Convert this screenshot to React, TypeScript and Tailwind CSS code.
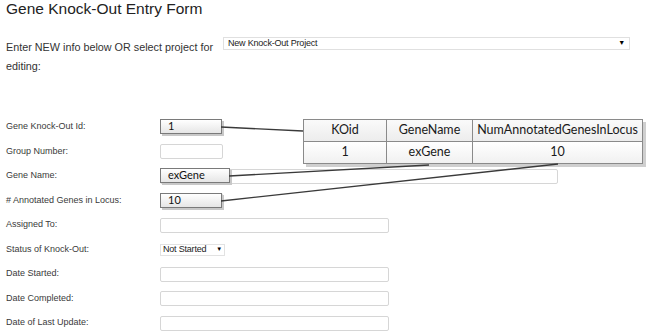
import { ReactNode } from "react";

const labelFont = { fontFamily: '"Liberation Sans", Arial, sans-serif' };
const calloutFont = { fontFamily: 'Lato, "Open Sans", sans-serif' };

function Field({ label, children }: { label: string; children?: ReactNode }) {
  return (
    <div className="flex h-[16px] items-center">
      <div className="w-[154px] shrink-0 text-[9px] text-[#3a3a3a]">{label}</div>
      <div className="relative flex h-full items-center">{children}</div>
    </div>
  );
}

function TextBox({ width }: { width: string }) {
  return <div className={`h-[15px] rounded-[2px] border border-[#d6d6d6] bg-white ${width}`} />;
}

function Callout({ text, width }: { text: string; width: string }) {
  return (
    <div
      className={`absolute left-0 top-0 flex h-[15px] items-center border border-[#7a7a7a] bg-gradient-to-b from-white to-[#e6e6e6] pl-[7px] text-[11px] text-[#111] shadow-[2px_2px_0_#c8c8c8] ${width}`}
      style={calloutFont}
    >
      {text}
    </div>
  );
}

export default function App() {
  return (
    <div className="relative h-[336px] w-[650px] overflow-hidden bg-white" style={labelFont}>
      <h1 className="pl-[6px] text-[15.5px] leading-[17px] text-[#222]">
        Gene Knock-Out Entry Form
      </h1>

      {/* project picker */}
      <div className="mt-[20px] flex pl-[6px]">
        <p className="w-[212px] pt-[1px] text-[10.8px] leading-[19px] text-[#333]">
          Enter NEW info below OR select project for editing:
        </p>
        <div className="ml-[5px] flex h-[13px] w-[407px] items-center justify-between border border-[#e0e0e0] bg-white pl-[4px] pr-[4px] text-[9px] tracking-[-0.2px] text-[#222]">
          <span>New Knock-Out Project</span>
          <span className="text-[7px] text-black">▼</span>
        </div>
      </div>

      {/* form rows */}
      <div className="mt-[43px] flex flex-col gap-[8.5px] pl-[6px]">
        <Field label="Gene Knock-Out Id:">
          <Callout text="1" width="w-[62px]" />
          <div className="w-[62px]" />
        </Field>
        <Field label="Group Number:">
          <TextBox width="w-[63px]" />
        </Field>
        <Field label="Gene Name:">
          <TextBox width="w-[398px]" />
          <Callout text="exGene" width="w-[70px]" />
        </Field>
        <Field label="# Annotated Genes in Locus:">
          <TextBox width="w-[63px]" />
          <Callout text="10" width="w-[62px]" />
        </Field>
        <Field label="Assigned To:">
          <TextBox width="w-[229px]" />
        </Field>
        <Field label="Status of Knock-Out:">
          <div className="flex h-[12px] w-[65px] items-center justify-between border border-[#e2e2e2] bg-white px-[2px] text-[9px] tracking-[-0.2px] text-[#222]">
            <span>Not Started</span>
            <span className="text-[6px] text-black">▼</span>
          </div>
        </Field>
        <Field label="Date Started:">
          <TextBox width="w-[229px]" />
        </Field>
        <Field label="Date Completed:">
          <TextBox width="w-[229px]" />
        </Field>
        <Field label="Date of Last Update:">
          <TextBox width="w-[229px]" />
        </Field>
      </div>

      {/* database row callout */}
      <table
        className="absolute left-[303px] top-[119px] w-[340px] border-collapse text-center text-[12.5px] text-[#1a1a1a] shadow-[3px_3px_0_#cfcfcf]"
        style={calloutFont}
      >
        <tbody>
          <tr className="h-[22px] bg-gradient-to-b from-[#fafafa] to-[#ececec]">
            <td className="w-[83px] border border-[#8a8a8a]">KOid</td>
            <td className="w-[86px] border border-[#8a8a8a]">GeneName</td>
            <td className="border border-[#8a8a8a]">NumAnnotatedGenesInLocus</td>
          </tr>
          <tr className="h-[22px] bg-gradient-to-b from-white to-[#f0f0f0]">
            <td className="border border-[#8a8a8a]">1</td>
            <td className="border border-[#8a8a8a]">exGene</td>
            <td className="border border-[#8a8a8a]">10</td>
          </tr>
        </tbody>
      </table>

      <svg className="pointer-events-none absolute left-0 top-0" width="650" height="336">
        <g stroke="#3a3a3a" strokeWidth="1.4" fill="none">
          <line x1="221" y1="127" x2="303" y2="131" />
          <line x1="229" y1="176" x2="429" y2="165" />
          <line x1="221" y1="201" x2="558" y2="164" />
        </g>
      </svg>
    </div>
  );
}
